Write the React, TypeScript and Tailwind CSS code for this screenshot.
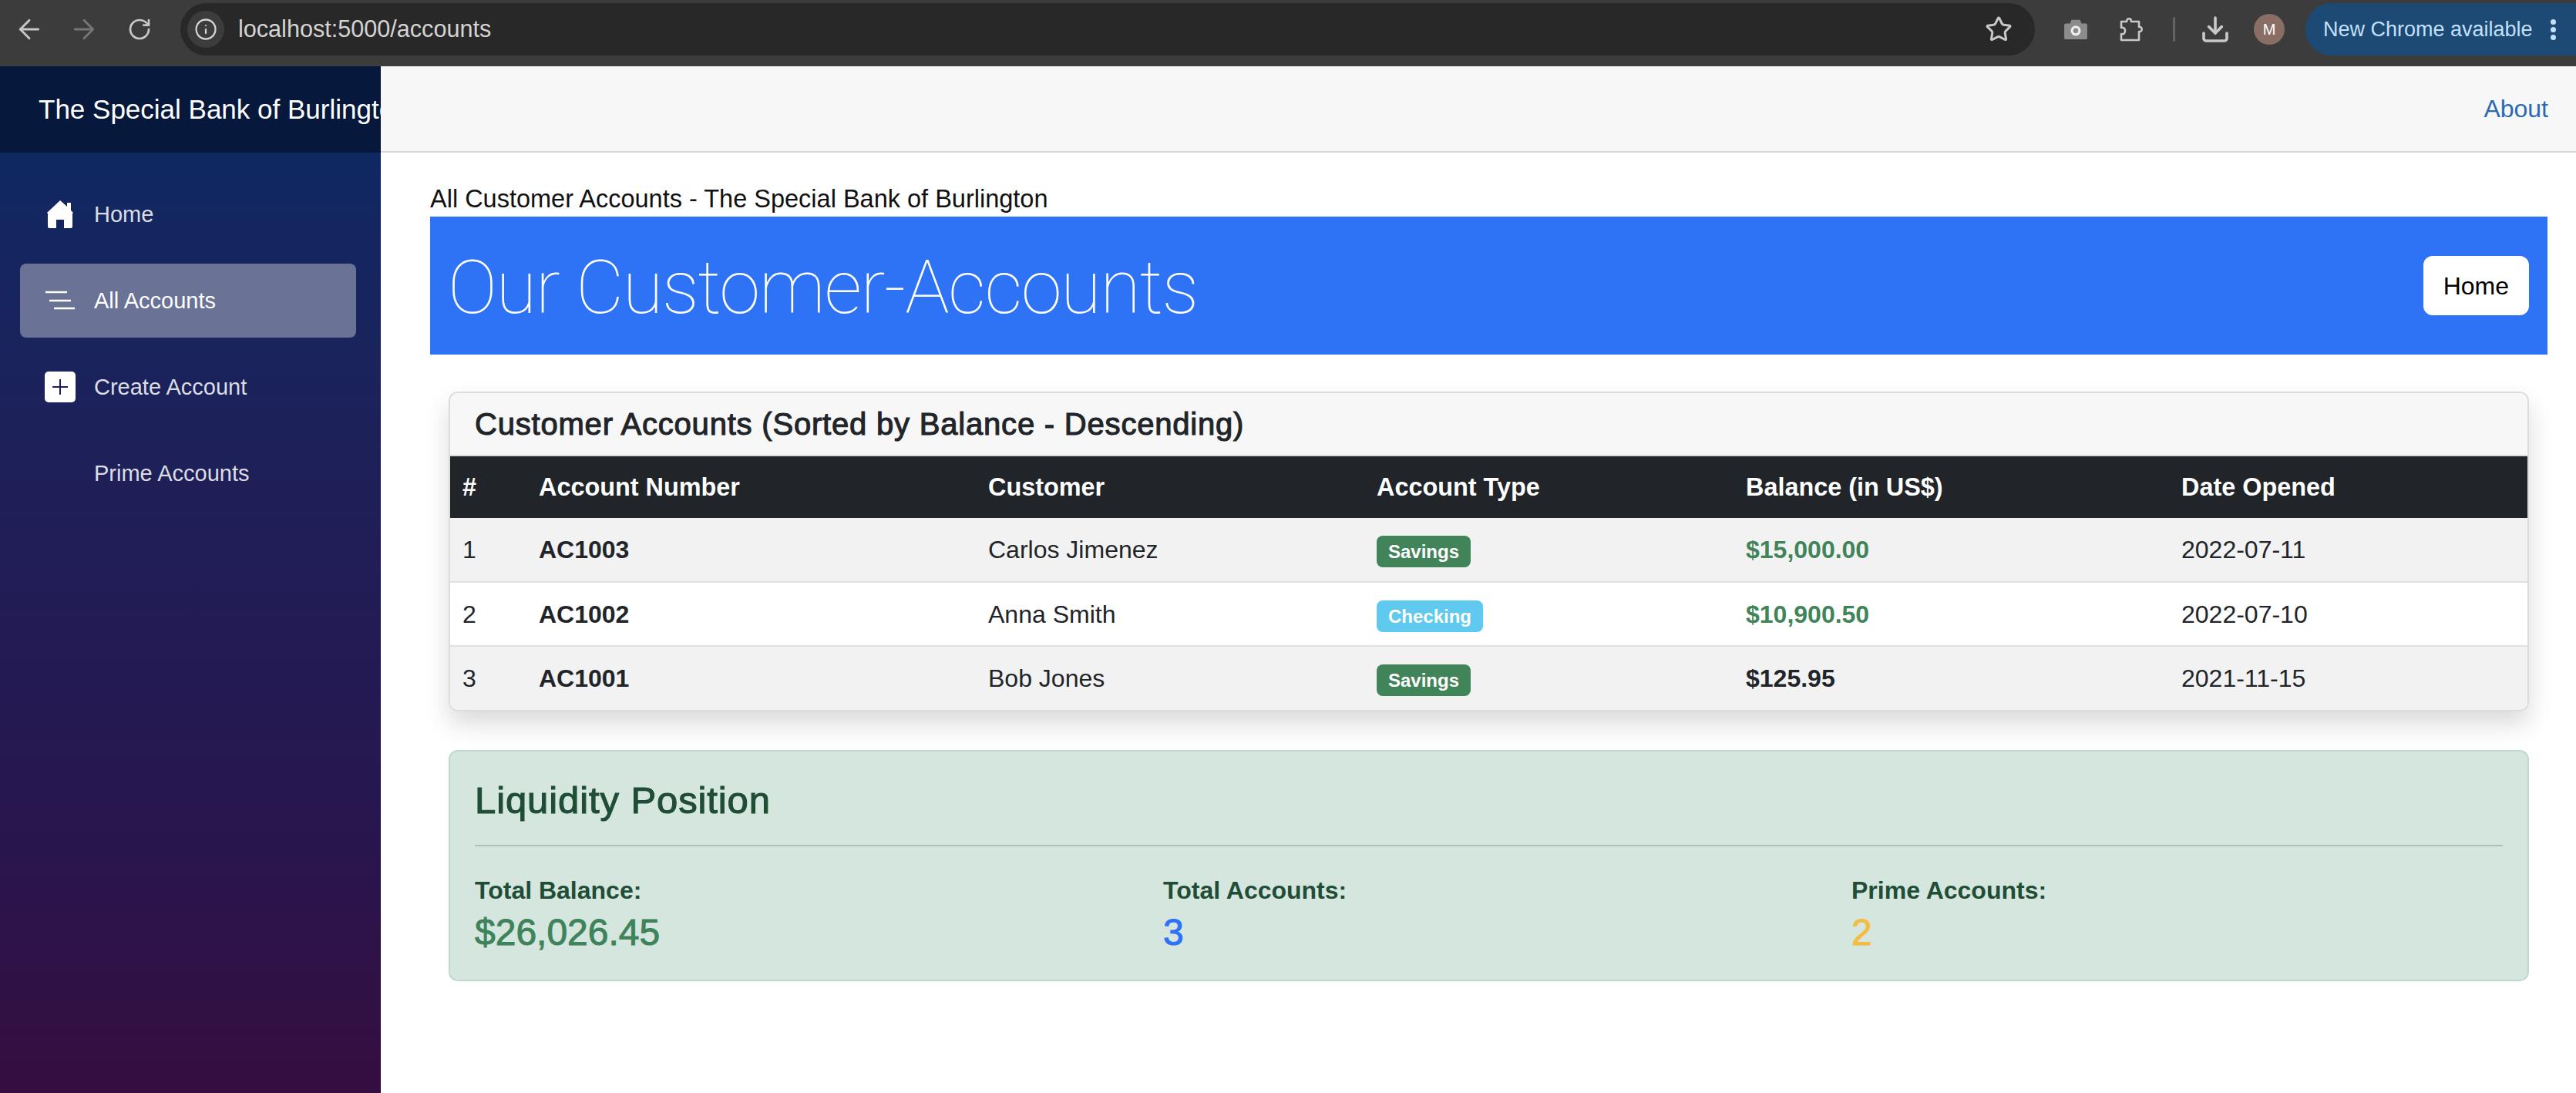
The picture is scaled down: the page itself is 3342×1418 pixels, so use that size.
import { ArrowLeft, ArrowRight, RotateCw, Info, Star, Download } from "lucide-react"

const accounts = [
  { id: 1, number: "AC1003", customer: "Carlos Jimenez", type: "Savings", balance: "$15,000.00", prime: true, opened: "2022-07-11" },
  { id: 2, number: "AC1002", customer: "Anna Smith", type: "Checking", balance: "$10,900.50", prime: true, opened: "2022-07-10" },
  { id: 3, number: "AC1001", customer: "Bob Jones", type: "Savings", balance: "$125.95", prime: false, opened: "2021-11-15" },
]

function ChromeBar() {
  return (
    <div className="flex h-[86px] items-center bg-[#3c3c3c] pb-[10px] text-[#c8c8c8]">
      <div className="flex w-[234px] shrink-0 items-center pl-[18px]">
        <ArrowLeft size={40} strokeWidth={1.7} />
        <ArrowRight size={40} strokeWidth={1.7} className="ml-[31px] text-[#767676]" />
        <RotateCw size={32} strokeWidth={2} className="ml-[36px]" />
      </div>
      <div className="flex h-[68px] w-[2406px] shrink-0 items-center rounded-full bg-[#282828] pl-[9px] pr-[29px]">
        <div className="flex h-[48px] w-[48px] items-center justify-center rounded-full bg-[#3c3c3c]">
          <Info size={30} strokeWidth={1.8} className="text-[#d5d5d5]" />
        </div>
        <span className="ml-[18px] text-[30.6px] text-[#d4d4d4]">localhost:5000/accounts</span>
        <Star size={36} strokeWidth={2} className="ml-auto text-[#c8c8c8]" />
      </div>
      <div className="ml-[37px] flex w-[32px] shrink-0 justify-center">
        <svg width="32" height="28" viewBox="0 0 32 30">
          <path d="M2 7h6l2-5h12l2 5h6a2 2 0 0 1 2 2v18a2 2 0 0 1-2 2H2a2 2 0 0 1-2-2V9a2 2 0 0 1 2-2z" fill="#8b8b8b" />
          <circle cx="16" cy="17" r="7" fill="#eeeeee" />
          <circle cx="16" cy="17" r="3.5" fill="#8b8b8b" />
        </svg>
      </div>
      <div className="ml-[41px] flex shrink-0">
        <svg width="32" height="32" viewBox="0 0 32 32" fill="none" stroke="#c8c8c8" strokeWidth="2.6" strokeLinejoin="round">
          <path d="M2 6h7c0-5 6-5 6 0h10v7c5-1 5 7 0 6v11H2v-8c4 1 5-2 5-4s-1-5-5-4z" />
        </svg>
      </div>
      <div className="ml-[37px] h-[32px] w-[3px] shrink-0 rounded bg-[#636363]" />
      <Download size={40} strokeWidth={2.2} className="ml-[32px] shrink-0" />
      <div className="ml-[30px] flex h-[40px] w-[40px] shrink-0 items-center justify-center rounded-full bg-[#8a6e64] text-[20px] text-white">M</div>
      <div className="ml-[27px] flex h-[68px] flex-1 items-center rounded-l-full rounded-r-[34px] bg-[#1c4a75] pl-[23px] text-[#c2e0fa]">
        <span className="text-[27px]">New Chrome available</span>
        <div className="ml-[23px] flex flex-col gap-[3px]">
          <span className="h-[7px] w-[7px] rounded-full bg-[#c2e0fa]" />
          <span className="h-[7px] w-[7px] rounded-full bg-[#c2e0fa]" />
          <span className="h-[7px] w-[7px] rounded-full bg-[#c2e0fa]" />
        </div>
      </div>
    </div>
  )
}

function Sidebar() {
  return (
    <aside className="flex w-[494px] shrink-0 flex-col overflow-hidden">
      {/* BRAND */}
      <div className="flex h-[112px] shrink-0 items-center whitespace-nowrap bg-[#06183b] pl-[50px] text-[35px] text-white">
        The Special Bank of Burlington
      </div>
      <nav className="flex flex-1 flex-col bg-gradient-to-b from-[#0f2862] via-[#27164f] via-70% to-[#350d40] pl-[26px] pr-[32px] pt-[32px] text-[29px] text-[#dcdde3]">
        <div className="mb-[16px] flex h-[96px] items-center rounded-[8px] pl-[32px]">
          <div className="flex w-[64px] pl-[3px]">
            <svg width="34" height="36" viewBox="0 0 34 36" fill="white">
              <path d="M17 0 26 8V3h5v10l3 3-1 1v17a2 2 0 0 1-2 2h-9V25H12v11H3a2 2 0 0 1-2-2V17l-1-1z" />
            </svg>
          </div>
          <span className="pt-[1px]">Home</span>
        </div>
        <div className="mb-[16px] flex h-[96px] items-center rounded-[8px] bg-[#6a7295] pl-[32px] text-white">
          <div className="flex w-[64px]">
            <svg width="40" height="26" viewBox="0 0 40 26" stroke="white" strokeWidth="2.5">
              <path d="M1 2h28M6 13h28M12 23h27" />
            </svg>
          </div>
          <span className="pt-[1px]">All Accounts</span>
        </div>
        <div className="mb-[16px] flex h-[96px] items-center rounded-[8px] pl-[32px]">
          <div className="flex w-[64px]">
            <svg width="40" height="40" viewBox="0 0 40 40">
              <rect width="40" height="40" rx="5" fill="white" />
              <path d="M20 10v20M10 20h20" stroke="#181f5c" strokeWidth="2" />
            </svg>
          </div>
          <span className="pt-[1px]">Create Account</span>
        </div>
        <div className="flex h-[96px] items-center rounded-[8px] pl-[96px]">
          <span className="pt-[1px]">Prime Accounts</span>
        </div>
      </nav>
    </aside>
  )
}

function TypeBadge({ type }: { type: string }) {
  const color = type === "Savings" ? "bg-[#428459]" : "bg-[#5fc9f0]"
  return (
    <span className={`inline-block rounded-[8px] px-[15px] py-[8px] text-[24px] leading-[25px] font-bold text-white ${color}`}>
      {type}
    </span>
  )
}

function AccountsCard() {
  return (
    <div className="overflow-hidden rounded-[12px] border-2 border-[#dcdcdc] shadow-[0_16px_32px_rgba(0,0,0,0.15)]">
      <div className="flex h-[82px] items-center border-b-2 border-[#dcdcdc] bg-[#f7f7f7] pl-[32px] text-[40px] tracking-[0.8px] text-[#212529] [-webkit-text-stroke:1.1px_#212529]">
        Customer Accounts (Sorted by Balance - Descending)
      </div>
      <table className="w-full table-fixed text-left text-[32px] text-[#212529]">
        <colgroup>
          <col className="w-[99px]" />
          <col className="w-[583px]" />
          <col className="w-[504px]" />
          <col className="w-[479px]" />
          <col className="w-[565px]" />
          <col />
        </colgroup>
        <thead className="bg-[#212529] text-[32.4px] text-white">
          <tr className="h-[80px]">
            <th className="pl-[16px] font-bold">#</th>
            <th className="pl-[16px] font-bold">Account Number</th>
            <th className="pl-[16px] font-bold">Customer</th>
            <th className="pl-[16px] font-bold">Account Type</th>
            <th className="pl-[16px] font-bold">Balance (in US$)</th>
            <th className="pl-[16px] font-bold">Date Opened</th>
          </tr>
        </thead>
        <tbody>
          {accounts.map((a) => (
            <tr key={a.id} className={`h-[83px] border-b-2 border-[#dee2e6] last:border-b-0 ${a.id === 2 ? "bg-white" : "bg-[#f2f2f2]"}`}>
              <td className="pl-[16px]">{a.id}</td>
              <td className="pl-[16px] font-bold">{a.number}</td>
              <td className="pl-[16px]">{a.customer}</td>
              <td className="pl-[16px]"><TypeBadge type={a.type} /></td>
              <td className={`pl-[16px] font-bold ${a.prime ? "text-[#428459]" : ""}`}>{a.balance}</td>
              <td className="pl-[16px]">{a.opened}</td>
            </tr>
          ))}
        </tbody>
      </table>
    </div>
  )
}

function LiquidityCard() {
  const stats = [
    { label: "Total Balance:", value: "$26,026.45", color: "text-[#3f835b] [-webkit-text-stroke:1px_#3f835b]" },
    { label: "Total Accounts:", value: "3", color: "text-[#2e72f5] [-webkit-text-stroke:1px_#2e72f5]" },
    { label: "Prime Accounts:", value: "2", color: "text-[#f5bc42] [-webkit-text-stroke:1px_#f5bc42]" },
  ]
  return (
    <div className="mt-[50px] h-[300px] rounded-[12px] border-2 border-[#c0d9ce] bg-[#d5e6de] px-[32px] pt-[34px] text-[#1f4d35]">
      <h4 className="text-[49px] leading-[58px] tracking-[0.9px] [-webkit-text-stroke:1.1px_#1f4d35]">Liquidity Position</h4>
      <div className="mt-[29px] h-[2px] bg-[#a9c2b3]" />
      <div className="mt-[36px] grid grid-cols-[893px_893px_1fr]">
        {stats.map((s) => (
          <div key={s.label}>
            <div className="text-[32px] leading-[42px] font-bold">{s.label}</div>
            <div className={`mt-[5px] text-[48px] leading-[58px] ${s.color}`}>{s.value}</div>
          </div>
        ))}
      </div>
    </div>
  )
}

export default function App() {
  return (
    <div className="flex h-[1418px] flex-col overflow-hidden bg-white font-['Liberation_Sans',sans-serif]">
      <ChromeBar />
      <div className="flex flex-1">
        <Sidebar />
        <main className="flex-1">
          {/* TOP NAV */}
          <div className="flex h-[112px] items-center justify-end border-b-2 border-[#d6d6d6] bg-[#f7f7f7] pr-[36px] text-[32px] text-[#2a69b4]">
            About
          </div>
          <div className="pl-[24px] pr-[37px] pt-[38px]">
            <div className="ml-[40px] text-[32.5px] leading-[45px] text-[#111]">All Customer Accounts - The Special Bank of Burlington</div>
            {/* HERO */}
            <div className="ml-[40px] flex h-[179px] items-center justify-between bg-[#2e72f5] pl-[23px] pr-[24px]">
              <h1 className="pt-[4px] font-['Roboto',sans-serif] text-[96px] font-[275] tracking-[-1.4px] text-white">Our Customer-Accounts</h1>
              <button className="h-[77px] rounded-[12px] bg-white px-[26px] text-[32px] text-black">Home</button>
            </div>
            <div className="ml-[64px] mr-[24px] mt-[48px]">
              <AccountsCard />
              <LiquidityCard />
            </div>
          </div>
        </main>
      </div>
    </div>
  )
}
